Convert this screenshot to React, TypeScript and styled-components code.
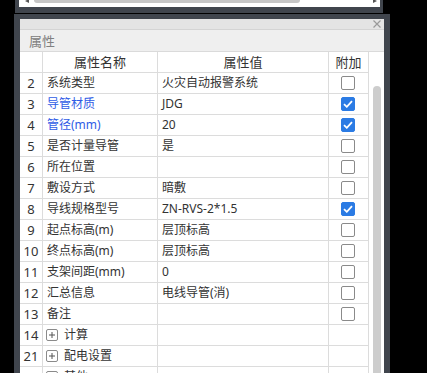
import React from "react"
import styled, { createGlobalStyle } from "styled-components"

const GlobalStyle = createGlobalStyle`
    html, body {
        margin: 0;
        padding: 0;
        background: #000;
        overflow: hidden;
    }
    body {
        font-family: "Noto Sans", "Noto Sans CJK SC", sans-serif;
        font-size: 12px;
        color: #333;
    }
`

const Stage = styled.div`
    width: 427px;
    height: 373px;
    padding-left: 14px;
    box-sizing: border-box;
    display: flex;
    flex-direction: column;
    overflow: hidden;
`

const TopWindow = styled.div`
    margin-left: 1px;
    width: 368px;
    height: 13px;
    flex: none;
    box-sizing: border-box;
    background: #40454d;
    padding: 0 3px 0 4px;
    margin-bottom: 1px;
`

const TopInner = styled.div`
    height: 7px;
    background: #fff;
    display: flex;
    align-items: flex-start;
    padding: 0 3px 0 6px;
    gap: 5px;
`

const Arrow = styled.div<{ $dir: "left" | "right" }>`
    width: 0;
    height: 0;
    border-top: 2px solid transparent;
    border-bottom: 2px solid transparent;
    ${(p) => (p.$dir === "left" ? "border-right: 4px solid #555;" : "border-left: 4px solid #555;")}
    margin-top: -1px;
`

const Thumb = styled.div`
    width: 266px;
    height: 3px;
    background: #c6c6c6;
    border-radius: 0 0 3px 3px;
`

const Spacer = styled.div`
    flex: 1;
`

const Panel = styled.div`
    width: 376px;
    flex: 1;
    box-sizing: border-box;
    background: #40454d;
    padding: 5px 6px 0 6px;
    display: flex;
    flex-direction: column;
    min-height: 0;
`

const Inner = styled.div`
    flex: 1;
    background: #fff;
    display: flex;
    flex-direction: column;
    min-height: 0;
    overflow: hidden;
`

const TitleBar = styled.div`
    height: 10px;
    flex: none;
    background: #e4e4e4;
    border-bottom: 1px solid #d4d4d4;
    display: flex;
    justify-content: flex-end;
    align-items: center;
    padding-right: 3px;
`

const SectionHead = styled.div`
    height: 21px;
    flex: none;
    background: #efefef;
    border-bottom: 1px solid #dadada;
    display: flex;
    align-items: center;
    padding-left: 9px;
    font-size: 13px;
    color: #808080;
`

const Body = styled.div`
    display: flex;
    flex: 1;
    min-height: 0;
`

const Grid = styled.div`
    display: grid;
    grid-template-columns: 23px 115px 171px 40px;
    grid-auto-rows: 21px;
    align-content: start;
`

const Cell = styled.div<{ $align?: "left" | "center"; $blue?: boolean }>`
    box-sizing: border-box;
    border-right: 1px solid #dcdcdc;
    border-bottom: 1px solid #dcdcdc;
    display: flex;
    align-items: center;
    justify-content: ${(p) => (p.$align === "center" ? "center" : "flex-start")};
    padding-left: ${(p) => (p.$align === "center" ? "0" : "4px")};
    color: ${(p) => (p.$blue ? "#2f5ce6" : "#333")};
    white-space: nowrap;
    overflow: hidden;
    line-height: 1;
`

const NumCell = styled(Cell)`
    justify-content: center;
    padding-left: 0;
    font-size: 13px;
`

const HeadCell = styled(Cell)`
    font-size: 13px;
`

const Check = styled.div<{ $on: boolean }>`
    width: 14px;
    height: 14px;
    box-sizing: border-box;
    border-radius: 2px;
    border: 1px solid ${(p) => (p.$on ? "#2b7be4" : "#8a8a8a")};
    background: ${(p) => (p.$on ? "#2b7be4" : "#fff")};
    display: flex;
    align-items: center;
    justify-content: center;
    margin-left: -1px;
`

const PlusBox = styled.div`
    width: 12px;
    height: 12px;
    box-sizing: border-box;
    border: 1px solid #8a8a8a;
    border-radius: 2px;
    display: flex;
    align-items: center;
    justify-content: center;
    margin: 0 6px 0 -1px;
`

const ScrollTrack = styled.div`
    flex: 1;
    padding: 34px 0 0 4px;
`

const ScrollThumb = styled.div`
    width: 8px;
    height: 100%;
    background: #cdcdcd;
    border-radius: 4px 4px 0 0;
`

type Row = {
    no: string
    name: string
    value?: string
    blue?: boolean
    check?: boolean
    group?: boolean
}

const rows: Row[] = [
    { no: "2", name: "系统类型", value: "火灾自动报警系统", check: false },
    { no: "3", name: "导管材质", value: "JDG", blue: true, check: true },
    { no: "4", name: "管径(mm)", value: "20", blue: true, check: true },
    { no: "5", name: "是否计量导管", value: "是", check: false },
    { no: "6", name: "所在位置", value: "", check: false },
    { no: "7", name: "敷设方式", value: "暗敷", check: false },
    { no: "8", name: "导线规格型号", value: "ZN-RVS-2*1.5", check: true },
    { no: "9", name: "起点标高(m)", value: "层顶标高", check: false },
    { no: "10", name: "终点标高(m)", value: "层顶标高", check: false },
    { no: "11", name: "支架间距(mm)", value: "0", check: false },
    { no: "12", name: "汇总信息", value: "电线导管(消)", check: false },
    { no: "13", name: "备注", value: "", check: false },
    { no: "14", name: "计算", group: true },
    { no: "21", name: "配电设置", group: true },
    { no: "26", name: "其他", group: true },
]

const CheckMark = () => (
    <svg width="10" height="8" viewBox="0 0 10 8">
        <path d="M1 4.2 L3.8 6.8 L9 1.2" fill="none" stroke="#fff" strokeWidth="1.8" />
    </svg>
)

const PlusIcon = () => (
    <svg width="8" height="8" viewBox="0 0 8 8">
        <path d="M4 1 V7 M1 4 H7" stroke="#555" strokeWidth="1" />
    </svg>
)

const CloseIcon = () => (
    <svg width="8" height="8" viewBox="0 0 8 8">
        <path d="M0.5 0.5 L7.5 7.5 M7.5 0.5 L0.5 7.5" stroke="#9a9a9a" strokeWidth="1.2" />
    </svg>
)

export default function App() {
    return (
        <Stage>
            <GlobalStyle />
            <TopWindow>
                <TopInner>
                    <Arrow $dir="left" />
                    <Thumb />
                    <Spacer />
                    <Arrow $dir="right" />
                </TopInner>
            </TopWindow>
            <Panel>
                <Inner>
                    <TitleBar>
                        <CloseIcon />
                    </TitleBar>
                    <SectionHead>属性</SectionHead>
                    <Body>
                        <Grid>
                            <HeadCell />
                            <HeadCell $align="center">属性名称</HeadCell>
                            <HeadCell $align="center">属性值</HeadCell>
                            <HeadCell $align="center">附加</HeadCell>
                            {rows.map((r) => (
                                <React.Fragment key={r.no}>
                                    <NumCell>{r.no}</NumCell>
                                    <Cell $blue={r.blue}>
                                        {r.group && (
                                            <PlusBox>
                                                <PlusIcon />
                                            </PlusBox>
                                        )}
                                        {r.name}
                                    </Cell>
                                    <Cell>{r.value}</Cell>
                                    <Cell $align="center">
                                        {!r.group && <Check $on={!!r.check}>{r.check && <CheckMark />}</Check>}
                                    </Cell>
                                </React.Fragment>
                            ))}
                        </Grid>
                        <ScrollTrack>
                            <ScrollThumb />
                        </ScrollTrack>
                    </Body>
                </Inner>
            </Panel>
        </Stage>
    )
}
